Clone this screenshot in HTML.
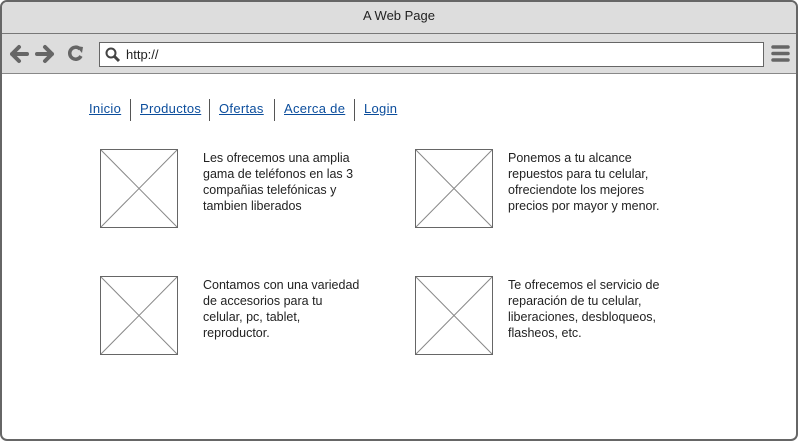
<!DOCTYPE html>
<html><head><meta charset="utf-8"><style>
*{margin:0;padding:0;box-sizing:border-box}
body{width:798px;height:441px;background:#fff;position:relative;overflow:hidden;font-family:"Liberation Sans",sans-serif;color:#222}
.frame{position:absolute;left:0;top:0;width:798px;height:441px;border:2px solid #666;border-radius:7px;overflow:hidden;background:#fff}
.title{position:absolute;left:0;top:0;right:0;height:32px;background:#ddd;border-bottom:1px solid #777;text-align:center;font-size:13px;line-height:28px}
.tool{position:absolute;left:0;top:32px;right:0;height:40px;background:#ddd;border-bottom:1px solid #888}
.addr{position:absolute;left:97px;top:8px;width:665px;height:25px;background:#fff;border:1px solid #666;font-size:13px;line-height:23px;padding-left:26px}
.nav a{position:absolute;top:97px;color:#0b4d9c;text-decoration:underline;font-size:13px;line-height:20px;white-space:nowrap}
.sep{position:absolute;top:97px;width:1px;height:22px;background:#555}
.img{position:absolute;width:78px;height:79px;border:1px solid #666}
.txt{position:absolute;font-size:12.5px;line-height:16px;width:240px;white-space:nowrap}
</style></head><body>
<div class="frame">
<div class="title">A Web Page</div>
<div class="tool">
<svg style="position:absolute;left:8px;top:10px" width="80" height="20" viewBox="0 0 80 20">
<path d="M2 10 L9 3 M2 10 L9 17 M2 10 H17" stroke="#666" stroke-width="4" fill="none" stroke-linecap="round"/>
<path d="M42 10 L35 3 M42 10 L35 17 M42 10 H27" stroke="#666" stroke-width="4" fill="none" stroke-linecap="round"/>
<path d="M70 5 A6 6 0 1 0 71 12" stroke="#666" stroke-width="3.5" fill="none"/>
<path d="M66 2 L73 3 L72 9 Z" fill="#666"/>
</svg>
<div class="addr">http://
<svg style="position:absolute;left:5px;top:4px" width="16" height="16"><circle cx="6" cy="6" r="4.5" stroke="#444" stroke-width="2" fill="none"/><path d="M9 9 L14 14" stroke="#444" stroke-width="3"/></svg></div>
<svg style="position:absolute;left:769px;top:11px" width="20" height="18"><path d="M2 2H17M2 8.5H17M2 15H17" stroke="#666" stroke-width="3.5" stroke-linecap="round"/></svg>
</div>
<div class="nav">
<a style="left:87px;letter-spacing:0.3px">Inicio</a><div class="sep" style="left:128px"></div>
<a style="left:138px;letter-spacing:0.3px">Productos</a><div class="sep" style="left:207px"></div>
<a style="left:217px;letter-spacing:0.3px">Ofertas</a><div class="sep" style="left:272px"></div>
<a style="left:282px;letter-spacing:0.3px">Acerca de</a><div class="sep" style="left:352px"></div>
<a style="left:362px;letter-spacing:0.3px">Login</a>
</div>

<div class="img" style="left:98px;top:147px"><svg width="76" height="77"><path d="M0 0L76 77M76 0L0 77" stroke="#888" stroke-width="1"/></svg></div>
<div class="txt" style="left:201px;top:148px">Les ofrecemos una amplia<br>gama de teléfonos en las 3<br>compañias telefónicas y<br>tambien liberados</div>

<div class="img" style="left:413px;top:147px"><svg width="76" height="77"><path d="M0 0L76 77M76 0L0 77" stroke="#888" stroke-width="1"/></svg></div>
<div class="txt" style="left:506px;top:148px">Ponemos a tu alcance<br>repuestos para tu celular,<br>ofreciendote los mejores<br>precios por mayor y menor.</div>

<div class="img" style="left:98px;top:274px"><svg width="76" height="77"><path d="M0 0L76 77M76 0L0 77" stroke="#888" stroke-width="1"/></svg></div>
<div class="txt" style="left:201px;top:275px">Contamos con una variedad<br>de accesorios para tu<br>celular, pc, tablet,<br>reproductor.</div>

<div class="img" style="left:413px;top:274px"><svg width="76" height="77"><path d="M0 0L76 77M76 0L0 77" stroke="#888" stroke-width="1"/></svg></div>
<div class="txt" style="left:506px;top:275px">Te ofrecemos el servicio de<br>reparación de tu celular,<br>liberaciones, desbloqueos,<br>flasheos, etc.</div>
</div>
</body></html>
